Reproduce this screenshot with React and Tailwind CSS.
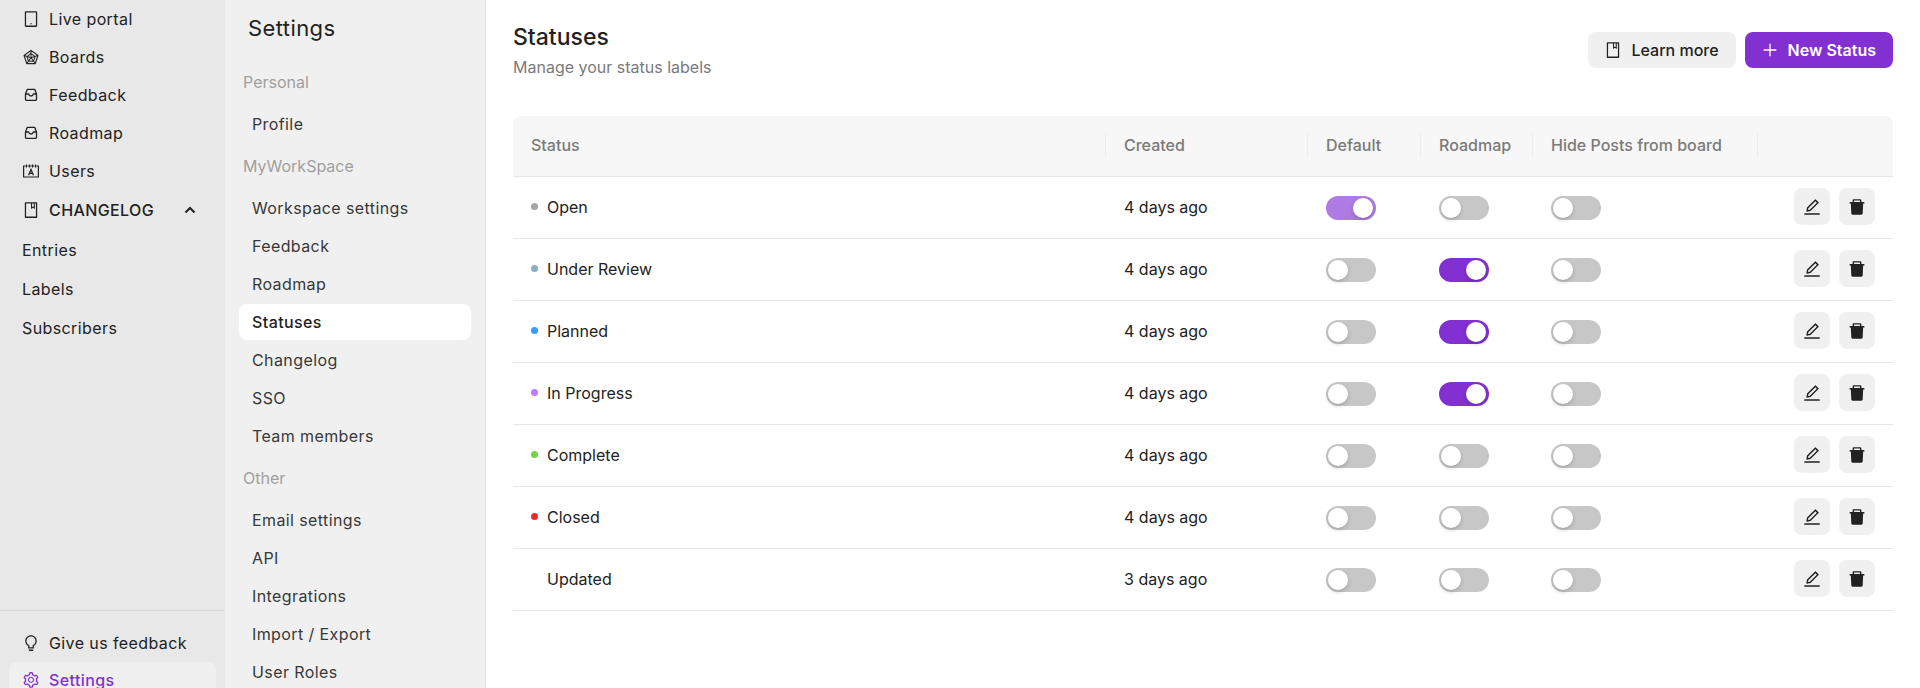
import React from "react";
import {
  AiOutlineTablet,
  AiOutlineRadarChart,
  AiOutlineBook,
  AiOutlineBulb,
  AiOutlineSetting,
  AiOutlinePlus,
  AiOutlineEdit,
  AiFillDelete,
} from "react-icons/ai";

function TrayIcon() {
  return (
    <svg className="size-[18px]" viewBox="0 0 18 18" fill="none" stroke="currentColor" strokeWidth="1.3" strokeLinejoin="round" aria-hidden="true">
      <path d="M3.5 8 5.2 3.4h7.6L14.5 8v5.6q0 .8-.8.8H4.3q-.8 0-.8-.8z" />
      <path d="M3.5 8h3.2c.2 1.3 1 2 2.3 2s2.1-.7 2.3-2h3.2" />
    </svg>
  );
}

function CardIcon() {
  return (
    <svg className="size-[18px]" viewBox="0 0 18 18" fill="none" stroke="currentColor" strokeWidth="1.2" aria-hidden="true">
      <path d="M3.4 4H1.6v11h14.8V4h-1.8M5.4 4h1.4M8.3 4h1.4M11.2 4h1.4M4.4 2.6v3M7.5 2.6v3M10.5 2.6v3M13.6 2.6v3" />
      <path d="M6.6 13.2 9 7.4l2.4 5.8M7.4 11.4h3.2" />
    </svg>
  );
}

function ChevronUp() {
  return (
    <svg className="size-3" viewBox="0 0 12 12" fill="none" stroke="currentColor" strokeWidth="2" aria-hidden="true">
      <path d="M1.5 8.5 6 4l4.5 4.5" />
    </svg>
  );
}

const portalLinks = [
  { label: "Live portal", icon: <AiOutlineTablet className="size-[18px]" /> },
  { label: "Boards", icon: <AiOutlineRadarChart className="size-[18px]" /> },
  { label: "Feedback", icon: <TrayIcon /> },
  { label: "Roadmap", icon: <TrayIcon /> },
  { label: "Users", icon: <CardIcon /> },
];

const settingsGroups = [
  { title: "Personal", items: ["Profile"] },
  {
    title: "MyWorkSpace",
    items: ["Workspace settings", "Feedback", "Roadmap", "Statuses", "Changelog", "SSO", "Team members"],
  },
  { title: "Other", items: ["Email settings", "API", "Integrations", "Import / Export", "User Roles"] },
];

const statuses = [
  { name: "Open", dot: "bg-[#a8a4a4]", created: "4 days ago", isDefault: true, roadmap: false },
  { name: "Under Review", dot: "bg-[#86b1bf]", created: "4 days ago", isDefault: false, roadmap: true },
  { name: "Planned", dot: "bg-[#339dff]", created: "4 days ago", isDefault: false, roadmap: true },
  { name: "In Progress", dot: "bg-[#c07aff]", created: "4 days ago", isDefault: false, roadmap: true },
  { name: "Complete", dot: "bg-[#73d44c]", created: "4 days ago", isDefault: false, roadmap: false },
  { name: "Closed", dot: "bg-[#f02b2b]", created: "4 days ago", isDefault: false, roadmap: false },
  { name: "Updated", dot: "bg-transparent", created: "3 days ago", isDefault: false, roadmap: false },
];

const columns = ["Created", "Default", "Roadmap", "Hide Posts from board", ""];

function Toggle({ label, defaultChecked, disabled }) {
  return (
    <label className="relative mt-[2px] block h-6 w-[50px]">
      <input
        type="checkbox"
        role="switch"
        aria-label={label}
        defaultChecked={defaultChecked}
        disabled={disabled}
        className="peer block h-6 w-[50px] appearance-none rounded-full bg-[#c7c7c7] checked:bg-[#8230d2] checked:disabled:bg-[#ad7be1]"
      />
      <span className="pointer-events-none absolute top-[2px] left-[2px] size-5 rounded-full bg-white shadow-[0_2px_4px_rgba(0,35,11,0.2)] peer-checked:left-[27px]" />
    </label>
  );
}

function Sidebar() {
  return (
    <aside className="flex w-[225px] shrink-0 flex-col overflow-hidden bg-[#e8e8e8] tracking-wide">
      <nav aria-label="Main" className="flex flex-col">
        {portalLinks.map((item) => (
          <a key={item.label} href="#" className="flex h-[38px] items-center gap-[9px] px-[22px]">
            {item.icon}
            {item.label}
          </a>
        ))}
        <button type="button" className="flex h-10 items-center gap-[9px] pr-[29px] pl-[22px] font-medium tracking-wide">
          <AiOutlineBook className="size-[18px]" />
          CHANGELOG
          <span className="ml-auto">
            <ChevronUp />
          </span>
        </button>
        {["Entries", "Labels", "Subscribers"].map((label) => (
          <a key={label} href="#" className="flex h-[39px] items-center px-[22px]">
            {label}
          </a>
        ))}
      </nav>
      <div className="mt-auto h-[78px] shrink-0 border-t border-[#d9d9d9] px-[9px] pt-3">
        <a href="#" className="flex h-[39px] items-center gap-[9px] px-[13px]">
          <AiOutlineBulb className="size-[18px]" />
          Give us feedback
        </a>
        <a href="#" className="flex h-9 items-center gap-[9px] rounded-lg bg-[#f0f0f0] px-[13px] font-medium text-[#8230d2]">
          <AiOutlineSetting className="size-[18px]" />
          Settings
        </a>
      </div>
    </aside>
  );
}

function SettingsPanel() {
  return (
    <aside className="w-[261px] shrink-0 overflow-hidden border-r border-[#e3e3e3] bg-[#f0f0f0] px-[14px] tracking-wide">
      <h2 className="mt-[13px] px-[9px] text-[22px] leading-[30px]">Settings</h2>
      <nav aria-label="Settings" className="mt-[18px]">
        {settingsGroups.map((group) => (
          <section key={group.title}>
            <h3 className="flex h-[42px] items-center px-1 tracking-normal text-[#a0a0a0]">{group.title}</h3>
            <ul className="flex flex-col gap-[2px] py-[3px]">
              {group.items.map((item) => (
                <li key={item}>
                  <a
                    href="#"
                    className={
                      item === "Statuses"
                        ? "flex h-9 items-center rounded-lg bg-white px-[13px] font-medium text-[#222]"
                        : "flex h-9 items-center rounded-lg px-[13px] text-[#383838]"
                    }
                  >
                    {item}
                  </a>
                </li>
              ))}
            </ul>
          </section>
        ))}
      </nav>
    </aside>
  );
}

export default function App() {
  return (
    <div className="flex h-screen overflow-hidden bg-white font-['Inter',sans-serif] text-base text-[#222]">
      <Sidebar />
      <SettingsPanel />
      <main className="min-w-0 flex-1 overflow-hidden px-[27px]">
        <header className="flex h-[116px] items-start justify-between pt-[22px]">
          <div>
            <h1 className="text-[23px] leading-[30px] font-medium">Statuses</h1>
            <p className="mt-[3px] leading-6 text-[#7a7a7a]">Manage your status labels</p>
          </div>
          <div className="mt-[10px] flex gap-[9px]">
            <button type="button" className="flex h-9 items-center gap-[9px] rounded-lg bg-[#f0f0f0] pr-[17px] pl-4 font-medium">
              <AiOutlineBook className="size-[18px]" />
              Learn more
            </button>
            <button type="button" className="flex h-9 items-center gap-[9px] rounded-lg bg-[#8230d2] pr-[17px] pl-4 font-semibold text-white">
              <AiOutlinePlus className="size-[18px]" />
              New Status
            </button>
          </div>
        </header>
        <table className="w-full table-fixed border-separate border-spacing-0 text-left">
          <colgroup>
            <col />
            <col className="w-[202px]" />
            <col className="w-[113px]" />
            <col className="w-[112px]" />
            <col className="w-[225px]" />
            <col className="w-[136px]" />
          </colgroup>
          <thead>
            <tr className="h-[61px] text-[#7a7a7a] *:pt-0 *:pb-[2px]">
              <th className="rounded-tl-lg border-b border-[#e6e6e6] bg-[#f7f7f7] px-[18px] font-medium">Status</th>
              {columns.map((title) => (
                <th key={title} className="border-b border-[#e6e6e6] bg-[#f7f7f7] font-medium whitespace-nowrap last:rounded-tr-lg">
                  <div className="h-6 border-l border-[#ededed] pl-[18px]">{title}</div>
                </th>
              ))}
            </tr>
          </thead>
          <tbody>
            {statuses.map((status) => (
              <tr key={status.name} className="h-[62px] *:border-b *:border-[#e6e6e6] *:pt-0 *:pr-[18px] *:pb-[2px] *:pl-[19px] *:first:pl-[18px]">
                <td>
                  <div className="flex items-center gap-[9px]">
                    <span className={`size-[7px] rounded-full ${status.dot}`} />
                    {status.name}
                  </div>
                </td>
                <td>{status.created}</td>
                <td>
                  <Toggle label={`${status.name} default`} defaultChecked={status.isDefault} disabled={status.isDefault} />
                </td>
                <td>
                  <Toggle label={`${status.name} on roadmap`} defaultChecked={status.roadmap} />
                </td>
                <td>
                  <Toggle label={`Hide ${status.name} posts from board`} />
                </td>
                <td>
                  <div className="flex justify-end gap-[9px]">
                    <button type="button" aria-label={`Edit ${status.name}`} className="flex h-[37px] w-9 items-center justify-center rounded-lg bg-[#f0f0f0]">
                      <AiOutlineEdit className="size-5" />
                    </button>
                    <button type="button" aria-label={`Delete ${status.name}`} className="flex h-[37px] w-9 items-center justify-center rounded-lg bg-[#f0f0f0]">
                      <AiFillDelete className="size-5" />
                    </button>
                  </div>
                </td>
              </tr>
            ))}
          </tbody>
        </table>
      </main>
    </div>
  );
}
